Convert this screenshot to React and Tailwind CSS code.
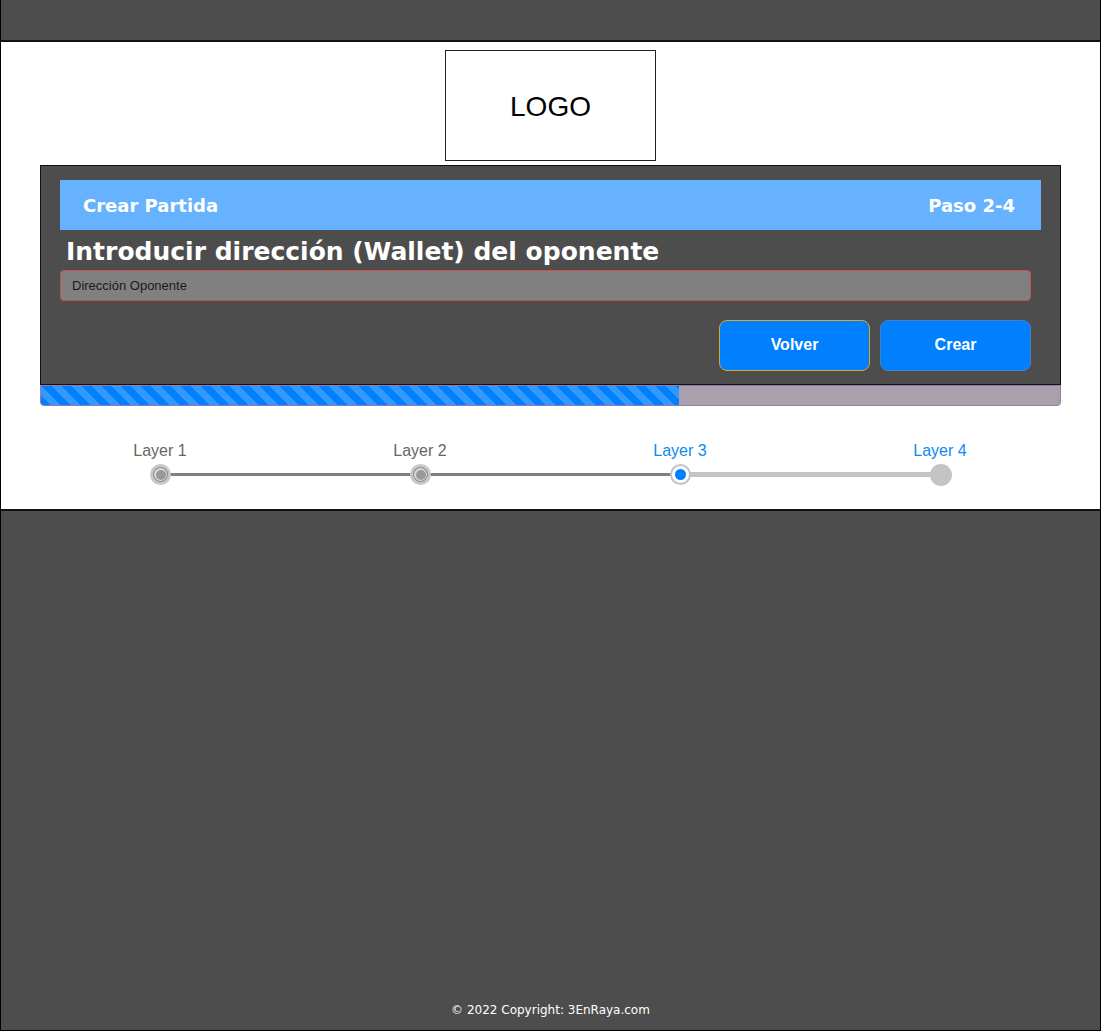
import React from "react";

export default function App() {
  const verdana = { fontFamily: '"DejaVu Sans", Verdana, sans-serif' };
  return (
    <div className="w-[1101px] h-[1031px] bg-[#4d4d4d] border-x border-b border-black flex flex-col overflow-hidden" style={{ fontFamily: '"Liberation Sans", Arial, sans-serif' }}>
      <div className="h-[40px] shrink-0" />
      <div className="h-[471px] shrink-0 bg-white border-y-2 border-[#111] flex flex-col">
        <div className="flex justify-center pt-[8px]">
          <div className="w-[211px] h-[111px] border border-[#222] flex items-center justify-center text-[28px] text-black">
            <span className="mt-[2px]">LOGO</span>
          </div>
        </div>
        <div className="mx-[39px] mt-[4px] h-[220px] bg-[#4d4d4d] border border-[#111] flex flex-col">
          <div className="mx-[19px] mt-[14px] h-[50px] bg-[#66b2ff] flex items-center justify-between pl-[23px] pr-[26px] text-white font-bold text-[18px]" style={verdana}>
            <span>Crear Partida</span>
            <span>Paso 2-4</span>
          </div>
          <div className="pl-[25px] mt-[4px] h-[36px] flex items-center text-white font-bold text-[25px]" style={verdana}>
            Introducir dirección (Wallet) del oponente
          </div>
          <div className="ml-[19px] mr-[29px] h-[31px] bg-[#808080] border border-[#c9504f] rounded-[4px] flex items-center pl-[11px] text-[13px] text-[#1a1a1a]">
            Dirección Oponente
          </div>
          <div className="flex justify-end gap-[10px] mr-[29px] mt-[19px]">
            <button className="w-[151px] h-[51px] bg-[#0080ff] border border-[#d6a834] rounded-[8px] text-white font-bold text-[16px] pb-[2px]">Volver</button>
            <button className="w-[151px] h-[51px] bg-[#0080ff] border border-[#4a7fc0] rounded-[8px] text-white font-bold text-[16px] pb-[2px]">Crear</button>
          </div>
        </div>
        <div className="mx-[39px] h-[21px] bg-[#a8a0ab] border border-[#9a78ad] rounded-b-[4px] overflow-hidden flex">
          <div
            className="h-full w-[638px]"
            style={{ background: "repeating-linear-gradient(45deg, #0080ff 0px, #0080ff 7px, #3399ff 7px, #3399ff 14px)" }}
          />
        </div>
        <div className="relative mt-[33px] h-[55px]">
          {[
            { x: 160, label: "Layer 1", c: "text-[#666666]" },
            { x: 420, label: "Layer 2", c: "text-[#666666]" },
            { x: 680, label: "Layer 3", c: "text-[#0a8cf0]" },
            { x: 940, label: "Layer 4", c: "text-[#0a8cf0]" },
          ].map((s) => (
            <div key={s.label} className={`absolute top-0 text-[16px] -translate-x-1/2 ${s.c}`} style={{ left: s.x - 1 }}>
              {s.label}
            </div>
          ))}
          <div className="absolute h-[3px] bg-[#808080] top-[34px]" style={{ left: 159, width: 521 }} />
          <div className="absolute h-[5px] bg-[#c4c4c4] top-[33px]" style={{ left: 680, width: 260 }} />
          {[159, 419].map((x) => (
            <div key={x} className="absolute w-[21px] h-[21px] rounded-full bg-[#c8c8c8] flex items-center justify-center top-[25px]" style={{ left: x - 10 }}>
              <div className="w-[15px] h-[15px] rounded-full bg-[#8a8a8a] flex items-center justify-center">
                <div className="w-[13px] h-[13px] rounded-full bg-[#d9d9d9] flex items-center justify-center">
                  <div className="w-[10px] h-[10px] rounded-full bg-[#999999]" />
                </div>
              </div>
            </div>
          ))}
          <div className="absolute w-[21px] h-[21px] rounded-full bg-[#c4c4c4] flex items-center justify-center top-[25px]" style={{ left: 669 }}>
            <div className="w-[17px] h-[17px] rounded-full bg-white flex items-center justify-center">
              <div className="w-[11px] h-[11px] rounded-full bg-[#0080ff]" />
            </div>
          </div>
          <div className="absolute w-[22px] h-[22px] rounded-full bg-[#c4c4c4] top-[25px]" style={{ left: 929 }} />
        </div>
      </div>
      <div className="flex-1" />
      <div className="h-[30px] pb-[10px] flex items-center justify-center text-white text-[12px]" style={verdana}>
        © 2022 Copyright: 3EnRaya.com
      </div>
    </div>
  );
}
